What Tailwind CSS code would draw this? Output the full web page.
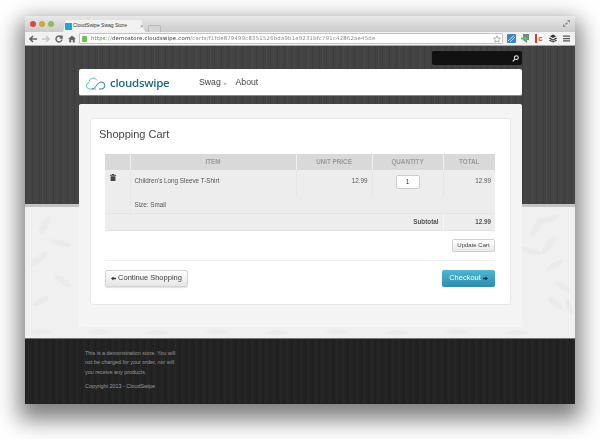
<!DOCTYPE html>
<html lang="en">
<head>
  <meta charset="UTF-8">
  <title>CloudSwipe Swag Store</title>
  <script src="https://cdn.jsdelivr.net/npm/@tailwindcss/browser@4"></script>
</head>
<body class="bg-white h-[439px] w-[600px] overflow-hidden font-['Liberation_Sans',Arial,sans-serif]">
<div class="ml-[25px] mt-[16px] w-[550px] h-[388px] flex flex-col rounded-t-[3px] overflow-hidden shadow-[0_10px_22px_6px_rgba(0,0,0,0.5)] relative blur-[0.35px]">
  <!-- browser tabs -->
  <div class="h-[16px] bg-gradient-to-b from-[#e8e8e8] to-[#cbcbcb] flex items-end relative shrink-0">
    <div class="flex gap-[3px] ml-[5px] mb-[5px]">
      <span class="w-[6px] h-[6px] rounded-full bg-[#d9474a]"></span>
      <span class="w-[6px] h-[6px] rounded-full bg-[#d9a13c]"></span>
      <span class="w-[6px] h-[6px] rounded-full bg-[#8fbb5c]"></span>
    </div>
    <div class="ml-[9px] w-[82px] h-[12px] bg-[#f2f2f2] [clip-path:polygon(3px_0,78px_0,82px_100%,0_100%)] flex items-center pl-[2px] gap-[1px] text-[5px] text-[#333]">
      <span class="w-[7px] h-[7px] bg-[#23a5d8] shrink-0"></span>
      <span class="whitespace-nowrap">CloudSwipe Swag Store</span>
      <span class="ml-[12px] text-[#888] text-[6px]">×</span>
    </div>
    <div class="ml-[3px] w-[13px] h-[7px] bg-[#d4d4d4] border border-[#b8b8b8] border-b-0 rounded-t-[2px]"></div>
    <svg class="absolute right-[5px] top-[4px] w-[7px] h-[7px]" viewBox="0 0 7 7" fill="#8a8a8a"><path d="M4 0h3v3zM0 7V4l3 3zM3 3l1-1 1 1-1 1zM2 4l1-1 1 1-1 1z"/></svg>
  </div>
  <!-- browser toolbar -->
  <div class="h-[14px] bg-[#f2f2f2] border-b border-[#a8a8a8] flex items-center text-[#666] shrink-0">
    <div class="flex items-center w-[54px] pl-[4px] gap-[5px] shrink-0">
      <svg class="w-[8px] h-[8px]" viewBox="0 0 8 8" fill="none" stroke="#666" stroke-width="1.6"><path d="M8 4H1.500M4 1 1 4l3 3"/></svg>
      <svg class="w-[8px] h-[8px]" viewBox="0 0 8 8" fill="none" stroke="#c8c8c8" stroke-width="1.6"><path d="M0 4h6.500M4 1l3 3-3 3"/></svg>
      <svg class="w-[8px] h-[8px]" viewBox="0 0 8 8" fill="none" stroke="#666" stroke-width="1.5"><path d="M6.600 2.500A3 3 0 1 0 7 4.500M7 .5v2.400H4.600"/></svg>
      <svg class="w-[8px] h-[8px]" viewBox="0 0 8 8" fill="#666"><path d="M4 .5 0 4h1.200v3.500h2V5h1.600v2.500h2V4H8z"/></svg>
    </div>
    <div class="w-[424px] h-[11px] bg-white border border-[#c4c4c4] rounded-[1px] flex items-center pl-[2px] text-[5.3px] tracking-[0.24px] font-['DejaVu_Sans',sans-serif] whitespace-nowrap overflow-hidden relative shrink-0">
      <span class="w-[5px] h-[6px] bg-[#6fbf4b] rounded-[1px] mr-[4px] shrink-0"></span>
      <span class="text-[#4c9a2a]">https</span><span class="text-[#888]">://</span><span class="text-[#333]">demostore.cloudswipe.com</span><span class="text-[#888]">/carts/f1fde879499c8351526bda9b1e9231bfc791c42862ae45de</span>
      <svg class="absolute right-[1px] top-[0.5px] w-[8px] h-[8px]" viewBox="0 0 10 10" fill="none" stroke="#999"><path d="m5 .8 1.300 2.800 3 .4-2.200 2 .6 3L5 7.500 2.300 9l.6-3L.7 4l3-.4z"/></svg>
    </div>
    <div class="flex items-center gap-[5px] ml-[4px] shrink-0">
      <svg class="w-[9px] h-[9px]" viewBox="0 0 9 9"><rect width="9" height="9" rx="1" fill="#3b87c4"/><path d="M1 7 7 1.500M3 8l5-5" stroke="#bfe0f5"/></svg>
      <svg class="w-[9px] h-[9px]" viewBox="0 0 9 9"><path d="M2 0h6v6H6v3L2 6z" fill="#6f8a80"/><path d="M0 3.500h4V2l3 2.500L4 7V5.500H0z" fill="#3fd06a"/></svg>
      <span class="w-[9px] h-[9px] border-l-2 border-[#e0362c] bg-white text-[#e0362c] text-[8px] leading-[9px] font-bold text-center">c</span>
      <svg class="w-[8px] h-[9px]" viewBox="0 0 9 9" fill="#333"><path d="M4.500 0 8 2 4.500 4 1 2zM1 3.500l3.500 2 3.500-2 1 1-4.500 2.500L0 4.500zM1 6l3.500 2L8 6l1 .8L4.500 9 0 6.800z"/></svg>
      <svg class="w-[7px] h-[7px] ml-[1px]" viewBox="0 0 7 7" fill="#555"><path d="M0 .5h7v1.300H0zM0 2.900h7v1.300H0zM0 5.300h7v1.300H0z"/></svg>
    </div>
  </div>
  <!-- store page -->
  <div class="flex-1 flex flex-col relative">
    <div class="absolute inset-x-0 top-0 h-[158px] bg-[#434343] bg-[repeating-linear-gradient(90deg,rgba(0,0,0,0.1)_0_1px,transparent_1px_3px,rgba(255,255,255,0.02)_3px_4px,transparent_4px_7px)]"></div>
    <div class="absolute inset-x-0 top-[158px] h-[134px] bg-[#f0f0f0] border-t-[3px] border-[#c4c4c4] overflow-hidden">
      <svg class="absolute inset-0 w-full h-full" viewBox="0 0 550 131" fill="#ebebeb">
        <g id="sprig">
          <ellipse cx="512" cy="20" rx="11" ry="3.500" transform="rotate(-60 512 20)"/>
          <ellipse cx="525" cy="12" rx="10" ry="3" transform="rotate(-20 525 12)"/>
          <ellipse cx="506" cy="44" rx="10" ry="3" transform="rotate(15 506 44)"/>
          <ellipse cx="524" cy="38" rx="11" ry="3.500" transform="rotate(-50 524 38)"/>
          <ellipse cx="530" cy="58" rx="10" ry="3" transform="rotate(-30 530 58)"/>
          <ellipse cx="538" cy="80" rx="9" ry="3" transform="rotate(35 538 80)"/>
          <ellipse cx="530" cy="96" rx="9" ry="3" transform="rotate(40 530 96)"/>
          <ellipse cx="544" cy="100" rx="8" ry="2.500" transform="rotate(70 544 100)"/>
        </g>
        <ellipse cx="20" cy="18" rx="11" ry="3.500" transform="rotate(-60 20 18)"/>
        <ellipse cx="36" cy="36" rx="10" ry="3" transform="rotate(15 36 36)"/>
        <ellipse cx="14" cy="52" rx="11" ry="3.500" transform="rotate(-40 14 52)"/>
        <ellipse cx="38" cy="74" rx="10" ry="3" transform="rotate(35 38 74)"/>
        <ellipse cx="16" cy="94" rx="9" ry="3" transform="rotate(-30 16 94)"/>
        <path d="M5 125c8-4 16-4 24 0-8 3-16 3-24 0zM62 125c8-4 16-4 24 0-8 3-16 3-24 0zM120 126c8-4 16-4 24 0-8 3-16 3-24 0zM180 125c8-4 16-4 24 0-8 3-16 3-24 0zM240 126c8-4 16-4 24 0-8 3-16 3-24 0zM300 125c8-4 16-4 24 0-8 3-16 3-24 0zM360 126c8-4 16-4 24 0-8 3-16 3-24 0zM420 125c8-4 16-4 24 0-8 3-16 3-24 0zM480 126c8-4 16-4 24 0-8 3-16 3-24 0z"/>
      </svg>
    </div>
    <div class="relative flex flex-col pl-[54px] w-[497px]">
      <div class="h-[23px] flex items-start justify-end pt-[5px]">
        <div class="w-[90px] h-[14px] bg-[#111] rounded-[2px] flex items-center justify-end pr-[3px]">
          <svg class="w-[7px] h-[7px]" viewBox="0 0 8 8" fill="none" stroke="#ddd" stroke-width="1.300"><circle cx="5" cy="3" r="2.200"/><path d="M3.400 4.600 .8 7.200"/></svg>
        </div>
      </div>
      <nav class="h-[27px] bg-white rounded-[2px] flex items-center pt-[1px] text-[#444] text-[8.700px] border-b border-[#888]">
        <div class="flex items-center w-[120px] pl-[6px] gap-[4px] shrink-0">
          <svg class="w-[21px] h-[14px] shrink-0" viewBox="0 0 21 14" fill="none" stroke-width="1">
            <path d="M11 13H4.500a3.300 3.300 0 0 1-.5-6.500A4.200 4.200 0 0 1 12 4.500" stroke="#56bfdc"/>
            <path d="M7 13c2 0 3-1.500 4.500-3.500S14 6 16 6a3.500 3.500 0 0 1 .5 7H14" stroke="#2c7f98"/>
          </svg>
          <span class="text-[11.500px] leading-none text-[#1f6a82] font-semibold font-['Open_Sans',sans-serif] tracking-[-0.3px] whitespace-nowrap">cloudswipe</span>
        </div>
        <span class="whitespace-nowrap">Swag <span class="text-[6px] text-[#888]">»</span></span>
        <span class="ml-[9px]">About</span>
      </nav>
      <!-- outer panel -->
      <div class="mt-[8px] h-[223px] bg-[#f4f4f4] rounded-[2px] pt-[14px] px-[11px]">
        <div class="h-[187px] bg-white border border-[#e8e8e8] rounded-[3px] pl-[8px] pr-[14px] flex flex-col">
          <h1 class="text-[11px] leading-none text-[#444] mt-[10px] mb-[14px] h-[11px]">Shopping Cart</h1>
          <div class="ml-[6px] w-[390px]">
            <table class="w-[390px] table-fixed bg-[#ededed] border-b border-[#e2e2e2] rounded-[2px] text-[6.300px] text-[#555] border-collapse">
              <thead>
                <tr class="h-[16px] bg-[#d9d9d9] text-[#9a9a9a] font-bold">
                  <th class="w-[25px] border-r border-[#efefef]"></th>
                  <th class="w-[166px] border-r border-[#efefef]">ITEM</th>
                  <th class="w-[76px] border-r border-[#efefef]">UNIT PRICE</th>
                  <th class="w-[71px] border-r border-[#efefef]">QUANTITY</th>
                  <th>TOTAL</th>
                </tr>
              </thead>
              <tbody>
                <tr class="h-[27px] align-top">
                  <td class="pl-[5px] pt-[4px]">
                    <svg class="w-[6px] h-[7px]" viewBox="0 0 6 7" fill="#444"><path d="M2 0h2v.8h2v.9H0V.8h2zM.6 2.200h4.800V7H.6z"/></svg>
                  </td>
                  <td class="pl-[4px] pt-[6px] border-l border-[#e6e6e6]">Children's Long Sleeve T-Shirt</td>
                  <td class="pr-[4px] pt-[6px] text-right border-l border-[#e6e6e6]">12.99</td>
                  <td class="pt-[5px] border-l border-[#e6e6e6]">
                    <div class="mx-auto w-[24px] h-[14px] bg-white border border-[#ccc] rounded-[2px] flex items-center justify-center text-[#333]">1</div>
                  </td>
                  <td class="pr-[4px] pt-[6px] text-right border-l border-[#e6e6e6]">12.99</td>
                </tr>
                <tr class="h-[16px] align-middle">
                  <td></td>
                  <td class="pl-[4px] border-l border-[#e6e6e6]">Size: Small</td>
                  <td colspan="3"></td>
                </tr>
                <tr class="h-[17px] font-bold border-t border-[#e4e4e4]">
                  <td colspan="4" class="text-right pr-[4px]">Subtotal</td>
                  <td class="text-right pr-[4px] border-l border-[#f5f5f5]">12.99</td>
                </tr>
              </tbody>
            </table>
            <div class="flex justify-end mt-[8px]">
              <button class="w-[43px] h-[13px] rounded-[2px] border border-[#d0d0d0] bg-gradient-to-b from-white to-[#e8e8e8] text-[6px] text-[#444] leading-none">Update Cart</button>
            </div>
            <div class="h-px bg-[#f0f0f0] mt-[8px]"></div>
            <div class="flex justify-between mt-[9px]">
              <button class="w-[83px] h-[17px] rounded-[2px] border border-[#d4d4d4] bg-gradient-to-b from-white to-[#e6e6e6] shadow-[0_1px_1px_rgba(0,0,0,0.12)] text-[7.500px] text-[#444] leading-none whitespace-nowrap flex items-center justify-center gap-[2px]">
                <svg class="w-[5px] h-[5px]" viewBox="0 0 5 5" fill="#333"><path d="M0 2.500 2.500.5v1.200H5v1.600H2.500v1.200z"/></svg>
                <span>Continue Shopping</span>
              </button>
              <button class="w-[53px] h-[17px] rounded-[2px] bg-gradient-to-b from-[#4fb6d4] to-[#2c8cab] text-[7.500px] text-white leading-none whitespace-nowrap flex items-center justify-center gap-[2px]">
                <span>Checkout</span>
                <svg class="w-[5px] h-[5px]" viewBox="0 0 5 5" fill="#16323d"><path d="M5 2.500 2.500.5v1.200H0v1.600h2.500v1.200z"/></svg>
              </button>
            </div>
          </div>
        </div>
      </div>
    </div>
    <!-- footer -->
    <footer class="absolute inset-x-0 top-[292px] h-[66px] bg-[#232323] bg-[repeating-linear-gradient(90deg,rgba(0,0,0,0.12)_0_1px,transparent_1px_3px,rgba(255,255,255,0.02)_3px_4px,transparent_4px_7px)] border-t border-[#777] pl-[60px] pt-[10px] text-[5.400px] text-[#999]">
      <p class="leading-[9.300px] w-[100px]">This is a demonstration store. You will<br>not be charged for your order, nor will<br>you receive any products.</p>
      <p class="mt-[5px] leading-[9px]">Copyright 2013 - CloudSwipe</p>
    </footer>
  </div>
</div>
</body>
</html>
